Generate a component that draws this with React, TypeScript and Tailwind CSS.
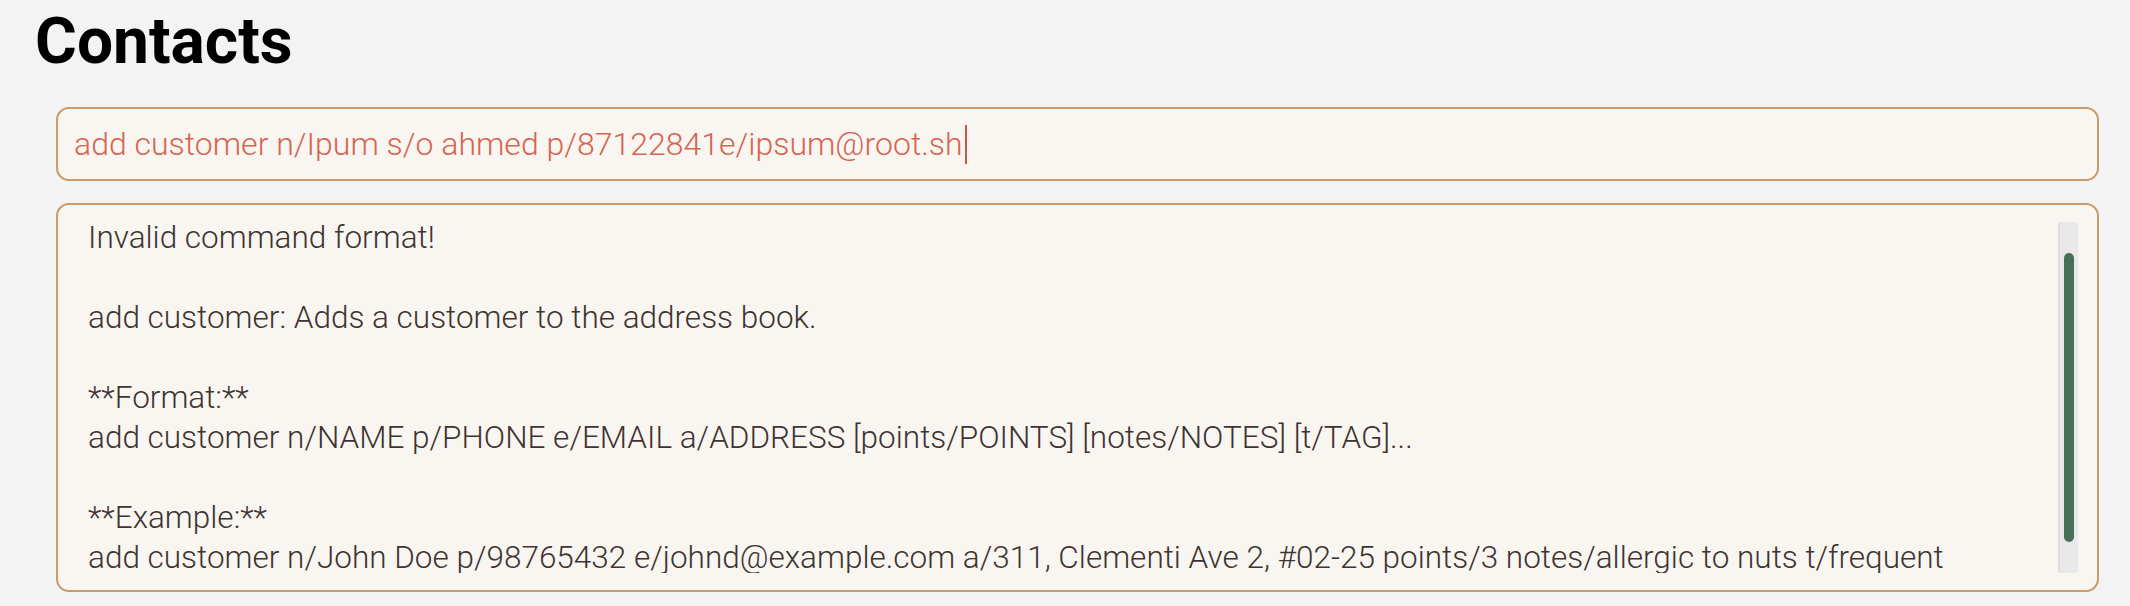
import React from 'react';

const OUTPUT_LINES = [
  'Invalid command format!',
  '',
  'add customer: Adds a customer to the address book.',
  '',
  '**Format:**',
  'add customer n/NAME p/PHONE e/EMAIL a/ADDRESS [points/POINTS] [notes/NOTES] [t/TAG]...',
  '',
  '**Example:**',
  'add customer n/John Doe p/98765432 e/johnd@example.com a/311, Clementi Ave 2, #02-25 points/3 notes/allergic to nuts t/frequent',
];

const CommandBox: React.FC<{ value: string }> = ({ value }) => (
  <div className="h-[74px] border-2 border-[#c99a6a] rounded-[13px] bg-[#f9f6f2] flex items-center pl-[16px]">
    <span className="text-[32px] font-light text-[#d6654f] whitespace-pre">{value}</span>
    <span className="w-[2px] h-[39px] bg-[#c95741] ml-[2px]" />
  </div>
);

const ResultBox: React.FC<{ lines: string[] }> = ({ lines }) => (
  <div className="h-[389px] border-2 border-[#c99a6a] rounded-[13px] bg-[#f9f6f2] flex">
    <div className="flex-1 overflow-hidden mt-[13px] mb-[17px] pl-[30px]">
      {lines.map((line, i) => (
        <div key={i} className="h-[40px] leading-[40px] text-[31.5px] font-light text-[#3e3431] whitespace-pre">
          {line}
        </div>
      ))}
    </div>
    {/* fake scrollbar */}
    <div className="w-[20px] my-[17px] mr-[19px] rounded-[3px] bg-[#e9e9e9] border-l-2 border-[#dcdcdc] flex flex-col py-[31px]">
      <div className="flex-1 w-[10px] ml-[4px] rounded-full bg-[#486e55]" />
    </div>
  </div>
);

export default function App() {
  return (
    <div className="min-h-screen bg-[#f3f3f3] pt-[10px] font-['Roboto',sans-serif]">
      <h1 className="pl-[35px] text-[64px] leading-[64px] font-bold text-black">Contacts</h1>
      <div className="mt-[33px] pl-[56px] pr-[31px] flex flex-col gap-[22px]">
        <CommandBox value="add customer n/Ipum s/o ahmed p/87122841e/ipsum@root.sh" />
        <ResultBox lines={OUTPUT_LINES} />
      </div>
    </div>
  );
}
